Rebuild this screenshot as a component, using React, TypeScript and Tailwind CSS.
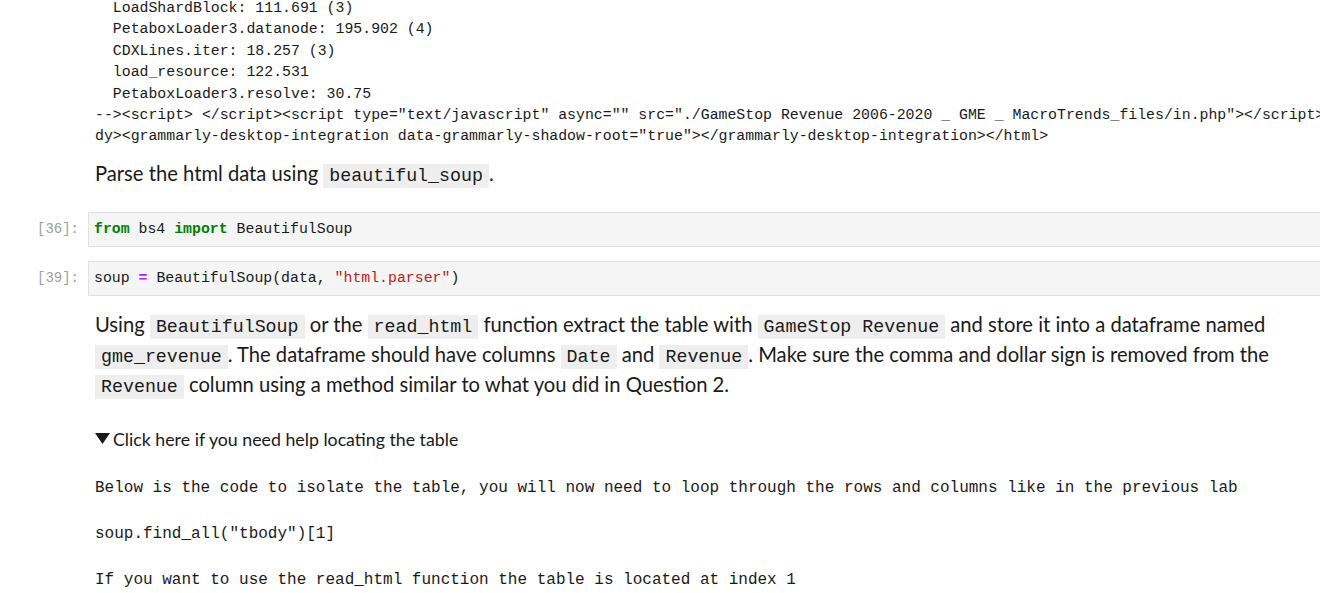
import React from "react";

const mono = "font-['Liberation_Mono','DejaVu_Sans_Mono',monospace]";
const sans = "font-['Lato','Noto_Sans',sans-serif]";

const outputLines = [
  "  LoadShardBlock: 111.691 (3)",
  "  PetaboxLoader3.datanode: 195.902 (4)",
  "  CDXLines.iter: 18.257 (3)",
  "  load_resource: 122.531",
  "  PetaboxLoader3.resolve: 30.75",
  '--><script> </script><script type="text/javascript" async="" src="./GameStop Revenue 2006-2020 _ GME _ MacroTrends_files/in.php"></script></bo',
  'dy><grammarly-desktop-integration data-grammarly-shadow-root="true"></grammarly-desktop-integration></html>',
];

const Code: React.FC<{ children: React.ReactNode }> = ({ children }) => (
  <code
    className={`${mono} bg-[#eeeeee] px-[6px] py-[2px] text-[18.3px] leading-[20px] text-[#1a1a1a]`}
  >
    {children}
  </code>
);

const CodeCell: React.FC<{ prompt: string; children: React.ReactNode }> = ({
  prompt,
  children,
}) => (
  <div className="flex">
    <div
      className={`${mono} w-[88px] shrink-0 pr-[9px] text-right text-[14px] leading-[35px] text-[#a0a0a0]`}
    >
      [{prompt}]:
    </div>
    <div
      className={`${mono} flex-1 border border-r-0 border-[#e0e0e0] bg-[#f5f5f5] pl-[5px] text-[14.85px] leading-[33px] text-[#1a1a1a] whitespace-pre`}
    >
      {children}
    </div>
  </div>
);

export default function App() {
  return (
    <div className="w-[1320px] h-[593px] overflow-hidden bg-white text-[#1a1a1a]">
      {/* output of the previous cell */}
      <div
        className={`${mono} -mt-[2px] pl-[95px] text-[14.85px] leading-[21.4px] text-[#1a1a1a]`}
      >
        {outputLines.map((line, i) => (
          <div key={i} className="whitespace-pre">
            {line}
          </div>
        ))}
      </div>

      <div className={`${sans} mt-[10px] pl-[95px] text-[20.2px] leading-[30px]`}>
        Parse the html data using <Code>beautiful_soup</Code>.
      </div>

      <div className="mt-[24px] flex flex-col gap-[14px]">
        <CodeCell prompt="36">
          <span className="font-bold text-[#008000]">from</span> bs4{" "}
          <span className="font-bold text-[#008000]">import</span> BeautifulSoup
        </CodeCell>
        <CodeCell prompt="39">
          soup <span className="font-bold text-[#aa22ff]">=</span>{" "}
          BeautifulSoup(data,{" "}
          <span className="text-[#ba2121]">"html.parser"</span>)
        </CodeCell>
      </div>

      <div
        className={`${sans} mt-[13px] pl-[95px] text-[20.2px] leading-[30px] whitespace-nowrap`}
      >
        Using <Code>BeautifulSoup</Code> or the <Code>read_html</Code> function
        extract the table with <Code>GameStop Revenue</Code> and store it into a
        dataframe named
        <br />
        <Code>gme_revenue</Code>. The dataframe should have columns{" "}
        <Code>Date</Code> and <Code>Revenue</Code>. Make sure the comma and
        dollar sign is removed from the
        <br />
        <Code>Revenue</Code> column using a method similar to what you did in
        Question 2.
      </div>

      <details open className={`${sans} mt-[28px] pl-[95px]`}>
        <summary className="flex list-none items-center text-[17.75px] leading-[24px] cursor-pointer">
          <svg
            className="mr-[3px] h-[11px] w-[15px] shrink-0"
            viewBox="0 0 15 11"
            fill="#1a1a1a"
          >
            <path d="M0 0h15L7.5 11z" />
          </svg>
          Click here if you need help locating the table
        </summary>
        <div
          className={`${mono} mt-[26px] flex flex-col gap-[24px] text-[16px] leading-[22px] whitespace-pre`}
        >
          <div>
            Below is the code to isolate the table, you will now need to loop
            through the rows and columns like in the previous lab
          </div>
          <div>soup.find_all("tbody")[1]</div>
          <div>If you want to use the read_html function the table is located at index 1</div>
        </div>
      </details>
    </div>
  );
}
